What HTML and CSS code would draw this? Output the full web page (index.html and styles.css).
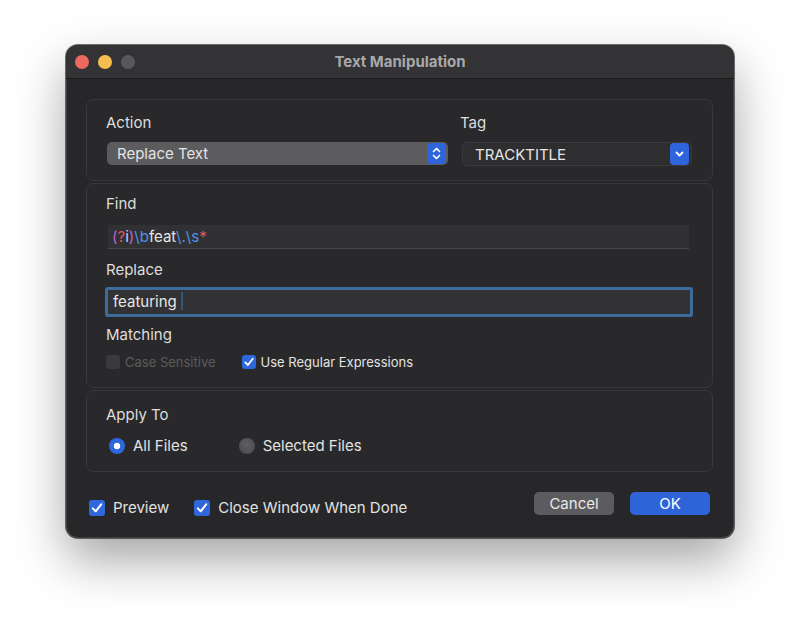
FILE: index.html
```html
<!DOCTYPE html>
<html lang="en">

<head>
  <title>Text Manipulation</title>
  <meta charset="utf-8">
  <link rel="stylesheet" href="styles.css">
</head>

<body>
  <div class="window">
    <!-- Title bar -->
    <div class="titlebar">
      <div class="lights">
        <span class="light red"></span>
        <span class="light yellow"></span>
        <span class="light gray"></span>
      </div>
      <div class="title">Text Manipulation</div>
    </div>

    <div class="content">
      <!-- Action / Tag -->
      <div class="group top">
        <div class="field-col">
          <div class="label">Action</div>
          <div class="popup popup-action">
            <span>Replace Text</span>
            <span class="stepper">
              <svg width="19" height="21" viewBox="0 0 19 21">
                <path d="M6.5 8.5 L9.5 5.5 L12.5 8.5" fill="none" stroke="#fff" stroke-width="1.7" stroke-linecap="round" stroke-linejoin="round" />
                <path d="M6.5 12.5 L9.5 15.5 L12.5 12.5" fill="none" stroke="#fff" stroke-width="1.7" stroke-linecap="round" stroke-linejoin="round" />
              </svg>
            </span>
          </div>
        </div>
        <div class="field-col">
          <div class="label tag-label">Tag</div>
          <div class="popup popup-tag">
            <span>TRACKTITLE</span>
            <span class="stepper">
              <svg width="19" height="22" viewBox="0 0 19 22">
                <path d="M6.5 9.5 L9.5 12.5 L12.5 9.5" fill="none" stroke="#fff" stroke-width="1.8" stroke-linecap="round" stroke-linejoin="round" />
              </svg>
            </span>
          </div>
        </div>
      </div>

      <!-- Find / Replace -->
      <div class="group find">
        <div class="label">Find</div>
        <div class="textfield find-field">
          <span class="rx-paren">(</span><span class="rx-red">?</span><span class="rx-flag">i</span><span class="rx-paren">)</span><span class="rx-blue">\b</span>feat<span class="rx-blue">\.\s</span><span class="rx-red">*</span>
        </div>
        <div class="label replace-label">Replace</div>
        <div class="textfield replace-field">featuring<span class="caret"></span></div>
        <div class="label matching-label">Matching</div>
        <div class="checks small">
          <label class="check disabled"><span class="box"></span>Case Sensitive</label>
          <label class="check"><span class="box on">
              <svg width="14" height="14" viewBox="0 0 14 14">
                <path d="M3.3 7.4 L5.9 10 L10.8 3.8" fill="none" stroke="#fff" stroke-width="1.8" stroke-linecap="round" stroke-linejoin="round" />
              </svg>
            </span>Use Regular Expressions</label>
        </div>
      </div>

      <!-- Apply To -->
      <div class="group apply">
        <div class="label">Apply To</div>
        <div class="radios">
          <label class="radio"><span class="dot on"></span>All Files</label>
          <label class="radio"><span class="dot"></span>Selected Files</label>
        </div>
      </div>

      <!-- Footer -->
      <div class="footer">
        <div class="checks">
          <label class="check big"><span class="box on">
              <svg width="16" height="16" viewBox="0 0 16 16">
                <path d="M3.8 8.4 L6.7 11.3 L12.2 4.4" fill="none" stroke="#fff" stroke-width="2" stroke-linecap="round" stroke-linejoin="round" />
              </svg>
            </span>Preview</label>
          <label class="check big"><span class="box on">
              <svg width="16" height="16" viewBox="0 0 16 16">
                <path d="M3.8 8.4 L6.7 11.3 L12.2 4.4" fill="none" stroke="#fff" stroke-width="2" stroke-linecap="round" stroke-linejoin="round" />
              </svg>
            </span>Close Window When Done</label>
        </div>
        <div class="buttons">
          <button class="btn cancel">Cancel</button>
          <button class="btn ok">OK</button>
        </div>
      </div>
    </div>
  </div>
</body>

</html>
```

FILE: styles.css
```css
* {
  box-sizing: border-box;
}

body {
  margin: 0;
  width: 800px;
  height: 626px;
  background-color: #ffffff;
  font-family: Inter, "Noto Sans", sans-serif;
  color: #dedede;
  padding: 45px 0 0 66px;
}

/* The dialog window */
.window {
  width: 668px;
  height: 493px;
  border-radius: 12px;
  background-color: #272729;
  overflow: hidden;
  box-shadow: 0 22px 50px rgba(0, 0, 0, 0.36), 0 0 0 1px rgba(0, 0, 0, 0.55), inset 0 0 0 1px rgba(255, 255, 255, 0.12);
}

/* Title bar */
.titlebar {
  height: 34px;
  background-color: #333335;
  border-bottom: 1px solid #1b1b1c;
  display: flex;
  align-items: center;
  position: relative;
}

.lights {
  display: flex;
  gap: 9px;
  padding-left: 9px;
  padding-top: 1px;
}

.light {
  width: 14px;
  height: 14px;
  border-radius: 50%;
}

.light.red {
  background-color: #ec6a5f;
}

.light.yellow {
  background-color: #f4bf50;
}

.light.gray {
  background-color: #59595b;
}

.title {
  position: absolute;
  left: 0;
  right: 0;
  top: 7px;
  text-align: center;
  font-size: 15px;
  font-weight: 700;
  color: #a9a9ab;
}

/* Content area */
.content {
  padding: 20px 21px 0 20px;
}

.group {
  border: 1px solid #38383a;
  border-radius: 7px;
  background-color: #29292b;
}

.label {
  font-size: 15px;
  line-height: 18px;
  height: 18px;
}

/* Action / Tag */
.group.top {
  display: grid;
  grid-template-columns: 341px 230px;
  column-gap: 14px;
  padding: 14px 20px 14px 20px;
}

.group.top .label {
  margin-left: -1px;
  margin-bottom: 10px;
}

.tag-label {
  margin-left: -2px !important;
}

.popup {
  height: 23px;
  border-radius: 5px;
  display: flex;
  align-items: center;
  justify-content: space-between;
  font-size: 15px;
  color: #e4e4e4;
  padding-right: 2px;
}

.popup-action {
  background-color: #5c5c5e;
  padding-left: 10px;
}

.popup-tag {
  background-color: #2e2e30;
  border: 1px solid #3a3a3c;
  padding-left: 12px;
  height: 24px;
}

.stepper {
  display: flex;
  background-color: #2e64dc;
  border-radius: 4px;
}

/* Find / Replace */
.group.find {
  margin-top: 2px;
  padding: 11px 23px 17px 19px;
}

.textfield {
  height: 24px;
  margin-left: 2px;
  background-color: #313133;
  font-size: 15px;
  line-height: 24px;
  padding-left: 4px;
  color: #e6e6e6;
}

.find-field {
  margin-top: 12px;
  border-bottom: 1px solid #474749;
}

.rx-paren {
  color: #b866d9;
}

.rx-red {
  color: #e5535e;
}

.rx-flag {
  color: #d9c9f2;
}

.rx-blue {
  color: #4f93e6;
}

.replace-label {
  margin-top: 12px;
}

.replace-field {
  margin-top: 11px;
  margin-right: -1px;
  background-color: #323234;
  box-shadow: 0 0 0 3px #3c6b9c;
  border-radius: 1px;
  line-height: 23px;
  padding-left: 5px;
}

.caret {
  display: inline-block;
  width: 2px;
  height: 18px;
  margin-left: 4px;
  vertical-align: -3px;
  background-color: #34557a;
}

.matching-label {
  margin-top: 12px;
}

/* Checkboxes */
.checks {
  display: flex;
  align-items: center;
}

.checks.small {
  margin-top: 10px;
  gap: 26px;
}

.check {
  display: flex;
  align-items: center;
  font-size: 13px;
  color: #e2e2e2;
}

.check .box {
  width: 14px;
  height: 14px;
  border-radius: 3px;
  background-color: #3d3d3f;
  margin-right: 5px;
  display: flex;
}

.check .box.on {
  background-color: #2f68dc;
}

.check.disabled {
  color: #5b5b5d;
}

.check.disabled .box {
  background-color: #3a3a3c;
}

.check.big {
  font-size: 15px;
}

.check.big .box {
  width: 16px;
  height: 16px;
  margin-right: 8px;
}

/* Apply To */
.group.apply {
  margin-top: 2px;
  padding: 15px 20px 16px 19px;
}

.radios {
  display: flex;
  margin-top: 12px;
  padding-left: 3px;
  gap: 51px;
}

.radio {
  display: flex;
  align-items: center;
  font-size: 15px;
  color: #e2e2e2;
}

.radio .dot {
  width: 16px;
  height: 16px;
  border-radius: 50%;
  background: radial-gradient(circle at 50% 40%, #5e5e60, #4a4a4c);
  margin-right: 8px;
}

.radio .dot.on {
  background: #2f68dc radial-gradient(circle, #ffffff 0 3px, #2f68dc 3.6px);
}

/* Footer */
.footer {
  margin-top: 20px;
  display: flex;
  justify-content: space-between;
  align-items: flex-start;
  padding: 0 3px 0 3px;
}

.footer .checks {
  margin-top: 6px;
  gap: 25px;
}

.buttons {
  display: flex;
  gap: 16px;
}

.btn {
  width: 80px;
  height: 23px;
  border: none;
  border-radius: 5px;
  font-family: Inter, "Noto Sans", sans-serif;
  font-size: 15px;
  color: #e8e8e8;
  padding: 0;
}

.btn.cancel {
  background-color: #5c5c5e;
}

.btn.ok {
  background-color: #2f64d8;
  color: #ffffff;
}
```
